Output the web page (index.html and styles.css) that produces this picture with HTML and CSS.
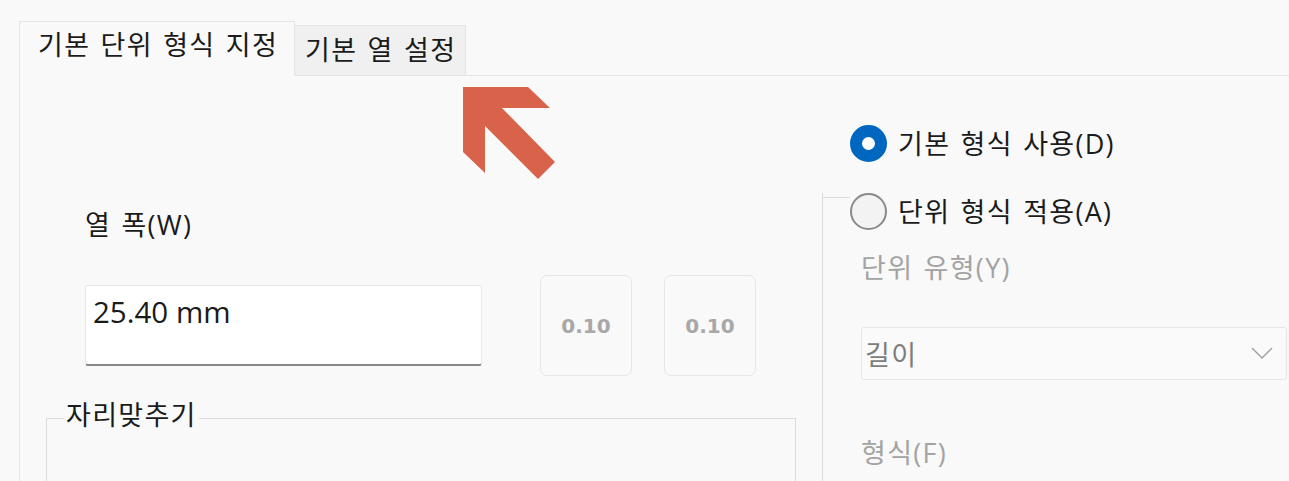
FILE: index.html
```html
<!DOCTYPE html>
<html lang="ko">
<head>
    <meta charset="UTF-8">
    <meta name="viewport" content="width=device-width, initial-scale=1.0">
    <title>열 설정</title>
    <link rel="stylesheet" href="styles.css">
</head>
<body>

    <div class="tabbar">
        <div class="tab tab-active">기본 단위 형식 지정</div>
        <div class="tab">기본 열 설정</div>
    </div>

    <div class="panel">
        <div class="left">
            <div class="field-label">열 폭(W)</div>
            <div class="width-row">
                <input type="text" class="width-input" value="25.40 mm">
                <button class="step" disabled>0.10</button>
                <button class="step" disabled>0.10</button>
            </div>
            <fieldset class="align-box">
                <legend>자리맞추기</legend>
            </fieldset>
        </div>

        <div class="right">
            <div class="radio-row">
                <span class="radio radio-on"></span>
                <span class="radio-text">기본 형식 사용(D)</span>
            </div>
            <div class="unit-group">
                <div class="group-head">
                    <span class="group-line"></span>
                    <span class="radio"></span>
                    <span class="radio-text">단위 형식 적용(A)</span>
                </div>
                <div class="dim-label">단위 유형(Y)</div>
                <div class="dropdown">
                    <span>길이</span>
                    <svg width="22" height="13" viewBox="0 0 22 13">
                        <polyline points="1,1 11,11 21,1" fill="none" stroke="#a3a3a3" stroke-width="1.5"/>
                    </svg>
                </div>
                <div class="dim-label dim-label-format">형식(F)</div>
            </div>
        </div>
    </div>

    <!-- callout arrow pointing at the second tab -->
    <svg class="pointer" width="100" height="100" viewBox="0 0 100 100">
        <polygon points="3,3 68,3 90,24 42,24 95,78 78,95 25,42 25,89 3,68" fill="#d9634a"/>
    </svg>

</body>
</html>
```

FILE: styles.css
```css
body {
    font-family: "Open Sans", "Noto Sans CJK KR", sans-serif;
    font-size: 27px;
    letter-spacing: 1.3px;
    word-spacing: 2px;
    background-color: #f9f9f9;
    color: #1b1b1b;
    margin: 0;
    height: 481px;
    overflow: hidden;
    position: relative;
}
.tabbar {
    display: flex;
    align-items: flex-end;
    margin: 21px 0 0 19px;
    border-bottom: 1px solid #e5e5e5;
}
.tab {
    box-sizing: border-box;
    height: 50px;
    width: 171px;
    padding-left: 10px;
    line-height: 48px;
    background-color: #f0f0f0;
    border: 1px solid #e5e5e5;
    border-left: none;
    border-bottom: none;
}
.tab-active {
    width: 276px;
    height: 55px;
    margin-bottom: -1px;
    padding: 8px 0 0 18px;
    line-height: 30px;
    background-color: #f9f9f9;
    border-left: 1px solid #e5e5e5;
}
.panel {
    display: flex;
    margin-left: 19px;
    border-left: 1px solid #e5e5e5;
    height: 405px;
}
.left {
    width: 802px;
}
.field-label {
    margin: 134px 0 0 65px;
    line-height: 30px;
}
.width-row {
    display: flex;
    align-items: center;
    margin: 35px 0 0 65px;
}
.width-input {
    box-sizing: border-box;
    width: 397px;
    height: 81px;
    margin: 0 58px 0 0;
    padding: 0 7px 28px;
    font-family: "Open Sans", sans-serif;
    font-size: 29.5px;
    letter-spacing: 0;
    line-height: 36px;
    color: #1b1b1b;
    background-color: #ffffff;
    border: 1px solid #e8e8e8;
    border-bottom: 2px solid #878787;
    border-radius: 3px;
    outline: none;
}
.step {
    box-sizing: border-box;
    width: 92px;
    height: 101px;
    margin-right: 32px;
    padding: 0;
    font-family: "DejaVu Sans", sans-serif;
    font-weight: bold;
    font-size: 20px;
    letter-spacing: 0;
    color: #a8a8a8;
    background-color: #f9f9f9;
    border: 1px solid #e6e6e6;
    border-radius: 7px;
}
.align-box {
    box-sizing: border-box;
    width: 750px;
    height: 81px;
    margin: 24px 0 0 26px;
    padding: 0 0 0 17px;
    border: 1px solid #dcdcdc;
    border-bottom: none;
}
.align-box legend {
    padding: 0 2px 6px;
    line-height: 30px;
}
.right {
    flex: 1;
}
.radio-row,
.group-head {
    display: flex;
    align-items: center;
    height: 37px;
}
.radio-row {
    margin: 49px 0 0 28px;
}
.radio {
    box-sizing: border-box;
    width: 37px;
    height: 37px;
    margin-right: 11px;
    border-radius: 50%;
    border: 2px solid #8a8a8a;
    background-color: #f3f3f3;
}
.radio-on {
    border: 12px solid #0067c0;
    background-color: #ffffff;
}
.radio-text {
    line-height: 37px;
}
.unit-group {
    margin-top: 35px;
    height: 290px;
    border-left: 1px solid #dcdcdc;
}
.group-head {
    margin-top: -4px;
}
.group-line {
    align-self: flex-start;
    width: 27px;
    margin-top: 4px;
    border-top: 1px solid #dcdcdc;
}
.dim-label {
    margin: 23px 0 0 38px;
    line-height: 30px;
    color: #a3a3a3;
}
.dim-label-format {
    margin-top: 58px;
}
.dropdown {
    box-sizing: border-box;
    display: flex;
    align-items: center;
    justify-content: space-between;
    width: 426px;
    height: 53px;
    margin: 44px 0 0 38px;
    padding: 0 13px 0 3px;
    color: #7d7d7d;
    background-color: #fafafa;
    border: 1px solid #e6e6e6;
    border-radius: 3px;
}
.pointer {
    position: absolute;
    left: 460px;
    top: 84px;
}
```
